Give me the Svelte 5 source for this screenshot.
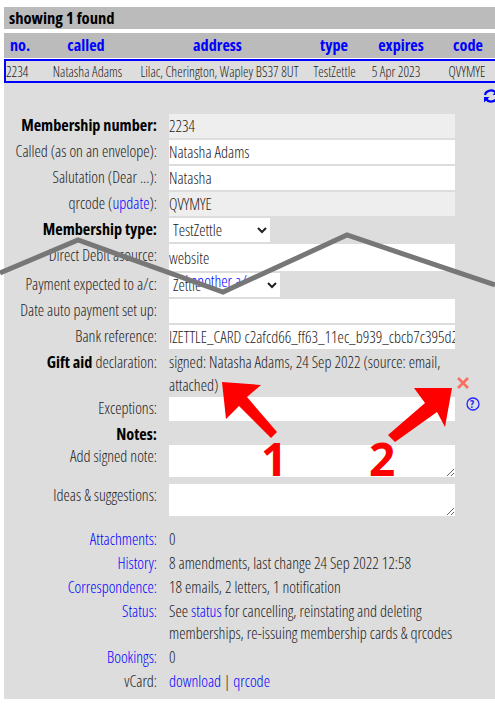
<script>
  const cols = [
    { head: 'no.', val: '2234' },
    { head: 'called', val: 'Natasha Adams' },
    { head: 'address', val: 'Lilac, Cherington, Wapley BS37 8UT' },
    { head: 'type', val: 'TestZettle' },
    { head: 'expires', val: '5 Apr 2023' },
    { head: 'code', val: 'QVYMYE' }
  ];
</script>

<div class="page">
  <div class="found">showing 1 found</div>

  <div class="cols heads">
    {#each cols as c}
      <a href="#top">{c.head}</a>
    {/each}
  </div>
  <div class="cols row">
    {#each cols as c}
      <span>{c.val}</span>
    {/each}
  </div>

  <div class="panel">
    <div class="tools">
      <svg width="16" height="16" viewBox="0 0 16 16" fill="none" stroke="#0000ff" stroke-width="2.2">
        <path d="M2 7 A6 5.4 0 0 1 13 5" />
        <path d="M14 9 A6 5.4 0 0 1 3 11" />
        <path d="M15 1.5 V7 H9.5 Z" fill="#0000ff" stroke="none" />
        <path d="M1 14.5 V9 H6.5 Z" fill="#0000ff" stroke="none" />
      </svg>
    </div>

    <div class="form">
      <label class="b" for="f1">Membership number:</label>
      <input id="f1" class="ro" value="2234" readonly />

      <label for="f2">Called (as on an envelope):</label>
      <input id="f2" value="Natasha Adams" />

      <label for="f3">Salutation (Dear ...):</label>
      <input id="f3" value="Natasha" />

      <label for="f4">qrcode (<a href="#top">update</a>):</label>
      <input id="f4" class="ro" value="QVYMYE" readonly />

      <label class="b" for="f5">Membership type:</label>
      <select id="f5" class="type"><option>TestZettle</option></select>

      <label for="f6"><span class="cut">Direct Debit a</span>source:</label>
      <input id="f6" class="tall" value="website" />

      <label for="f7">Payment expected to a/c:</label>
      <div class="paywrap">
        <select id="f7" class="pay"><option>Zettle</option></select>
        <a class="another" href="#top">add another a/c</a>
      </div>

      <label for="f8">Date auto payment set up:</label>
      <input id="f8" value="" />

      <label for="f9">Bank reference:</label>
      <input id="f9" value="IZETTLE_CARD c2afcd66_ff63_11ec_b939_cbcb7c395d21" />

      <div class="lab"><span class="b">Gift aid</span> declaration:</div>
      <div class="gift">signed: Natasha Adams, 24 Sep 2022 (source: email, attached)</div>

      <label for="f10">Exceptions:</label>
      <input id="f10" value="" />

      <div class="lab b notes">Notes:</div>
      <div class="notes"></div>

      <label for="f11">Add signed note:</label>
      <textarea id="f11" class="first"></textarea>

      <label for="f12">Ideas &amp; suggestions:</label>
      <textarea id="f12"></textarea>
    </div>

    <div class="info">
      <a class="lab" href="#top">Attachments:</a>
      <div>0</div>
      <a class="lab" href="#top">History:</a>
      <div>8 amendments, last change 24 Sep 2022 12:58</div>
      <a class="lab" href="#top">Correspondence:</a>
      <div>18 emails, 2 letters, 1 notification</div>
      <a class="lab" href="#top">Status:</a>
      <div class="status">See <a href="#top">status</a> for cancelling, reinstating and deleting memberships, re-issuing membership cards &amp; qrcodes</div>
      <a class="lab" href="#top">Bookings:</a>
      <div>0</div>
      <div class="lab">vCard:</div>
      <div><a href="#top">download</a> | <a href="#top">qrcode</a></div>
    </div>
  </div>

  <svg class="marks" width="495" height="704" viewBox="0 0 495 704">
    <polyline points="0,273 78,240 223,292 347,235 495,285" fill="none" stroke="#777" stroke-width="5" />
    <polygon fill="#ff0000" points="222,382 261,385 247,397 277,432 271,438 239,406 226,419" />
    <polygon fill="#ff0000" points="452,388 414,388 425,403 388,435 395,442 437,412 445,427" />
    <path d="M458 378 L468 388 M468 378 L458 388" stroke="#f8705f" stroke-width="2.6" fill="none" />
    <circle cx="473" cy="404" r="6" fill="none" stroke="#2222ff" stroke-width="1.3" />
  </svg>
  <span class="qm">?</span>
  <span class="num one">1</span>
  <span class="num two">2</span>
</div>

<style>
  :global(body) { background: #fff; }
  .page {
    position: relative;
    width: 495px;
    height: 704px;
    overflow: hidden;
    padding: 7px 0 0 4px;
    box-sizing: border-box;
    font-family: "Open Sans", "Liberation Sans", sans-serif;
    font-stretch: 75%;
    font-weight: 300;
    font-size: 16px;
    color: #222;
  }
  a { color: #0000ff; text-decoration: none; }
  .found {
    background: #bbb;
    height: 22px;
    line-height: 22px;
    padding-left: 5px;
    font-weight: 700;
    font-size: 16.6px;
    color: #000;
  }
  .cols {
    display: grid;
    text-align: center;
    white-space: nowrap;
  }
  .heads {
    grid-template-columns: 32px 100px 163px 70px 64px 70px;
    width: 499px;
    margin-top: 4px;
    background: #bbb;
    height: 25px;
    line-height: 25px;
    font-weight: 700;
    font-size: 16.2px;
  }
  .row {
    grid-template-columns: 30px 103px 161px 69px 54px 88px;
    width: 507px;
    height: 24px;
    line-height: 21px;
    margin-top: 1px;
    background: #ddd;
    border: 2px solid #0000ff;
    box-sizing: border-box;
    font-size: 13.8px;
  }
  .row span:first-child { text-align: left; }
  .panel {
    background: #ddd;
    height: 616px;
    position: relative;
    padding-top: 31px;
    box-sizing: border-box;
  }
  .tools {
    position: absolute;
    left: 479px;
    top: 4px;
  }
  .form, .info {
    display: grid;
    grid-template-columns: 153px 286px;
    column-gap: 12px;
    row-gap: 2px;
  }
  label, .lab {
    text-align: right;
    line-height: 23px;
    white-space: nowrap;
  }
  label.b, .lab.b { font-weight: 700; font-size: 16.2px; color: #000; }
  .lab .b { font-weight: 700; font-size: 16.2px; color: #000; }
  input, select, textarea {
    font: inherit;
    color: #222;
    border: none;
    background: #fff;
    height: 24px;
    box-sizing: border-box;
    padding: 0;
    margin: 0;
    border-radius: 0;
    outline: none;
  }
  input { width: 286px; }
  .ro { background: #eee; }
  .tall { height: 27px; }
  .type { width: 101px; }
  .paywrap { position: relative; height: 24px; }
  .pay { width: 111px; display: block; }
  .another {
    position: absolute;
    left: -1px;
    top: -3px;
    line-height: 23px;
    white-space: nowrap;
    clip-path: polygon(0 -7px, 120px -7px, 56px 22px, 0 3px);
  }
  .gift { line-height: 23px; height: 44px; }
  .notes { height: 20px; line-height: 22px; }
  textarea {
    display: block;
    width: 286px;
    height: 32px;
    resize: both;
  }
  .first { margin-bottom: 5px; }
  .info {
    margin-top: 11px;
    row-gap: 0;
  }
  .info > div, .info > a { line-height: 24px; }
  .info > .status { line-height: 22px; padding: 1px 0; }
  .marks { position: absolute; left: 0; top: 0; }
  .qm {
    position: absolute;
    left: 470px;
    top: 396px;
    color: #2222ff;
    font-size: 11px;
    line-height: 16px;
    font-weight: 700;
  }
  .num {
    position: absolute;
    top: 427px;
    color: #ff0000;
    font-size: 46px;
    font-weight: 700;
    font-stretch: 100%;
    line-height: 62px;
  }
  .one { left: 261px; }
  .two { left: 369px; }
</style>
